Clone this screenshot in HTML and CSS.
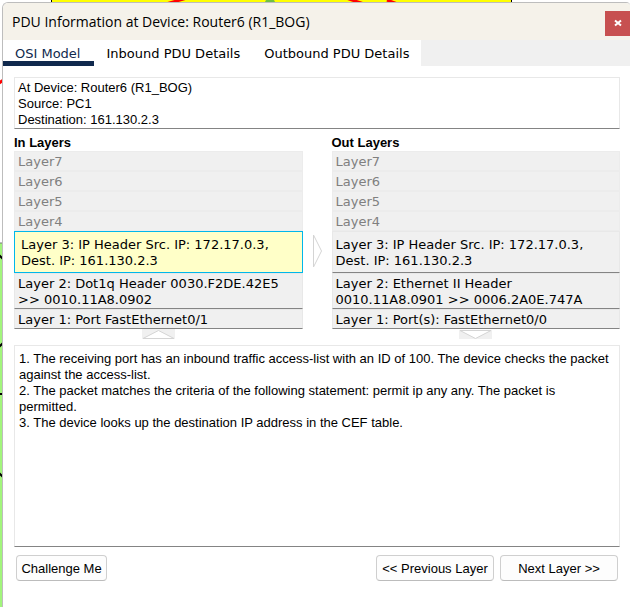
FILE: index.html
```html
<!DOCTYPE html>
<html lang="en">
<head>
<meta charset="utf-8">
<title>PDU Information</title>
<link rel="stylesheet" href="styles.css">
</head>
<body>
<svg class="workspace" aria-hidden="true">
  <rect x="0" y="243" width="3" height="100%" fill="#a2f57c"/>
  <path d="M0 243h3" stroke="#777"/>
  <rect x="51.500" y="-1" width="460" height="12" fill="#ff0" stroke="#000"/>
  <path d="M166 4L187 -2M346 -2L364 4M387 0L400 5M-1 83L5 79" stroke="#f00" stroke-width="3" fill="none"/>
  <path d="M264 4l3-6h6l3 6z" fill="#70bf44"/>
  <path d="M-1 255l5 5M-1 347l5-5M0 394h4M-1 473l5 5" stroke="#000" stroke-width="2"/>
</svg>
<main class="dialog">
  <header class="titlebar">
    <h1 class="title">PDU Information at Device: Router6 (R1_BOG)</h1>
    <button class="close" type="button" aria-label="Close">
      <svg width="8" height="8" viewBox="0 0 8 8"><path d="M1 1.500L7 6.500M7 1.500L1 6.500" stroke="#fff" stroke-width="2"/></svg>
    </button>
  </header>
  <nav class="tabs">
    <button class="tab active" type="button">OSI Model</button>
    <button class="tab" type="button">Inbound PDU Details</button>
    <button class="tab" type="button">Outbound PDU Details</button>
  </nav>
  <div class="content">
    <section class="box info">
      <p>At Device: Router6 (R1_BOG)</p>
      <p>Source: PC1</p>
      <p>Destination: 161.130.2.3</p>
    </section>
    <div class="columns">
      <section class="column">
        <h2>In Layers</h2>
        <ul class="layers">
          <li class="off">Layer7</li>
          <li class="off">Layer6</li>
          <li class="off">Layer5</li>
          <li class="off">Layer4</li>
          <li class="tall selected">Layer 3: IP Header Src. IP: 172.17.0.3,<br>Dest. IP: 161.130.2.3</li>
          <li class="double">Layer 2: Dot1q Header 0030.F2DE.42E5<br>&gt;&gt; 0010.11A8.0902</li>
          <li>Layer 1: Port FastEthernet0/1</li>
        </ul>
        <svg class="flow" width="33" height="10" viewBox="0 0 33 10"><path d="M0 0h33v10H0z" fill="#f0f0f0"/><path d="M1 9.500L16.500 1.500L32 9.500z" fill="#fff" stroke="#d4d4d4"/></svg>
      </section>
      <svg class="across" width="9" height="34" viewBox="0 0 9 34"><path d="M.5 1L8.500 17L.5 33z" fill="#fff" stroke="#d4d4d4"/></svg>
      <section class="column">
        <h2>Out Layers</h2>
        <ul class="layers">
          <li class="off">Layer7</li>
          <li class="off">Layer6</li>
          <li class="off">Layer5</li>
          <li class="off">Layer4</li>
          <li class="tall">Layer 3: IP Header Src. IP: 172.17.0.3,<br>Dest. IP: 161.130.2.3</li>
          <li class="double">Layer 2: Ethernet II Header<br>0010.11A8.0901 &gt;&gt; 0006.2A0E.747A</li>
          <li>Layer 1: Port(s): FastEthernet0/0</li>
        </ul>
        <svg class="flow" width="33" height="10" viewBox="0 0 33 10"><path d="M0 1h33v9H0z" fill="#f0f0f0"/><path d="M1 1.500L16.500 9.500L32 1.500z" fill="#fff" stroke="#d4d4d4"/></svg>
      </section>
    </div>
    <section class="box notes">
      <p>1. The receiving port has an inbound traffic access-list with an ID of 100. The device checks the packet against the access-list.</p>
      <p>2. The packet matches the criteria of the following statement: permit ip any any. The packet is permitted.</p>
      <p>3. The device looks up the destination IP address in the CEF table.</p>
    </section>
    <footer class="actions">
      <button class="action challenge" type="button">Challenge Me</button>
      <button class="action" type="button">&lt;&lt; Previous Layer</button>
      <button class="action" type="button">Next Layer &gt;&gt;</button>
    </footer>
  </div>
</main>
</body>
</html>
```
FILE: styles.css
```css
* { box-sizing: border-box; }

body {
  margin: 0;
  min-height: 100vh;
  display: flex;
  background: #fff;
  color: #000;
  font: 13px/16px "Liberation Sans", Arial, sans-serif;
}

h1, h2, p, ul { margin: 0; padding: 0; }
button { font: inherit; color: inherit; }

.workspace {
  position: absolute;
  inset: 0;
  z-index: -1;
  width: 100%;
  height: 100%;
}

.dialog {
  flex: 1;
  display: flex;
  flex-direction: column;
  min-width: 0;
  margin: 2px 0 0 2px;
  border: 1px solid #bdbdbd;
  border-width: 1px 0 0 1px;
  border-radius: 6px 4px 0 0;
  background: #fff;
  overflow: hidden;
}

.titlebar {
  display: flex;
  align-items: center;
  justify-content: space-between;
  height: 37px;
  padding-left: 9px;
  background: #f5f2ea;
}

.title {
  font: 14px/20px "Open Sans", "Segoe UI", sans-serif;
}

.close {
  display: grid;
  place-items: center;
  width: 25px;
  height: 25px;
  margin-top: 3px;
  padding: 0;
  border: 0;
  background: #c75050;
}

.tabs {
  display: flex;
  height: 26px;
  background: #f0f0f0;
}

.tab {
  padding: 6px 12px 0;
  border: 0;
  border-bottom: 5px solid #fff;
  background: #fff;
  font: 13px/15px "DejaVu Sans", Verdana, sans-serif;
}

.tab.active {
  padding-right: 14px;
  border-color: #10294d;
  color: #10294d;
}

.content {
  flex: 1;
  display: flex;
  flex-direction: column;
  padding: 11px 10px 26px 11px;
}

.box {
  border: 1px solid #e8e8e8;
  border-bottom-color: #848484;
}

.info { padding: 2px 3px 0; }

.columns {
  display: flex;
  gap: 10px;
  padding-top: 6px;
}

.column {
  flex: 1;
  display: flex;
  flex-direction: column;
}

.column h2 { font-size: 13px; line-height: 16px; }

.layers {
  list-style: none;
  font: 13px/16px "DejaVu Sans", Verdana, sans-serif;
}

.layers li {
  height: 20px;
  padding: 2px 3px 0;
  border: 1px solid #e8e8e8;
  border-bottom-color: #848484;
  background: #f0f0f0;
  white-space: nowrap;
}

.layers .off {
  border-color: #ececec;
  color: #808080;
}

.layers .double { height: 36px; }

.layers .tall {
  height: 42px;
  padding-top: 5px;
}

.layers .selected {
  padding-left: 6px;
  border-color: #00b7eb;
  background: #ffffc8;
}

.flow { align-self: center; }

.across {
  flex: none;
  margin-top: 99px;
}

.notes {
  flex: 1;
  margin-top: 6px;
  padding: 5px 4px;
}

.actions {
  display: flex;
  gap: 6px;
  padding: 8px 2px 0;
}

.action {
  width: 118px;
  height: 26px;
  padding: 1px 0 0;
  border: 1px solid #cfcfcf;
  border-bottom-color: #bcbcbc;
  border-radius: 4px;
  background: #fdfdfd;
}

.challenge {
  width: 91px;
  margin-right: auto;
}
```
